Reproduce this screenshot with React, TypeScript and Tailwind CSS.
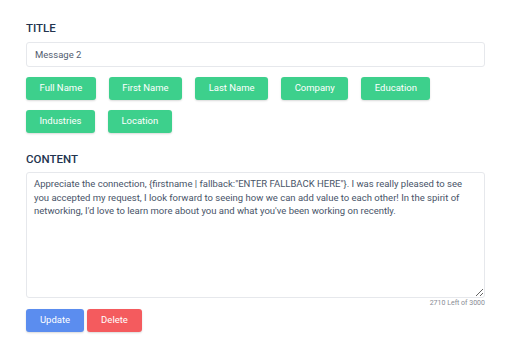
import { useState } from "react";

const fields = ["Full Name", "First Name", "Last Name", "Company", "Education", "Industries", "Location"];

const initial =
  "Appreciate the connection, {firstname | fallback:\"ENTER FALLBACK HERE\"}. I was really pleased to see you accepted my request, I look forward to seeing how we can add value to each other! In the spirit of networking, I'd love to learn more about you and what you've been working on recently.";

export default function App() {
  const [title, setTitle] = useState("Message 2");
  const [content, setContent] = useState(initial);

  return (
    <div className="min-h-screen bg-white pl-[26px] pr-[27px] pt-[20px] font-['Roboto',sans-serif]">
      <h3 className="text-[11.5px] leading-[16px] font-medium text-[#23344f]">TITLE</h3>
      <input
        value={title}
        onChange={e => setTitle(e.target.value)}
        className="mt-[6px] block w-full h-[25px] px-[8px] rounded-[3px] border border-[#e6e8ec] text-[9.5px] text-[#525d70] focus:outline-none"
      />

      <div className="mt-[10px] flex flex-wrap gap-x-[13px] gap-y-[10px]">
        {fields.map(f => (
          <button
            key={f}
            className="h-[23px] px-[13.5px] rounded-[3px] bg-[#3dd08c] text-white text-[9.5px] shadow-[0_1px_2px_rgba(0,0,0,0.15)]"
          >
            {f}
          </button>
        ))}
      </div>

      <h3 className="mt-[18px] text-[11.5px] leading-[16px] font-medium text-[#23344f]">CONTENT</h3>
      <textarea
        value={content}
        onChange={e => setContent(e.target.value)}
        className="mt-[5px] block w-full h-[126px] pl-[7px] pr-[16px] py-[4px] rounded-[3px] border border-[#e6e8ec] text-[9.5px] leading-[13.5px] text-[#485468] focus:outline-none"
      />
      <div className="text-right text-[7px] leading-[10px] text-[#888c94]">
        2710 Left of 3000
      </div>

      <div className="mt-[1px] flex gap-[3px]">
        <button className="h-[23px] w-[58px] rounded-[3px] bg-[#5b8def] text-white text-[9.5px] shadow-[0_1px_2px_rgba(0,0,0,0.15)]">Update</button>
        <button className="h-[23px] w-[55px] rounded-[3px] bg-[#f45b5e] text-white text-[9.5px] shadow-[0_1px_2px_rgba(0,0,0,0.15)]">Delete</button>
      </div>
    </div>
  );
}
